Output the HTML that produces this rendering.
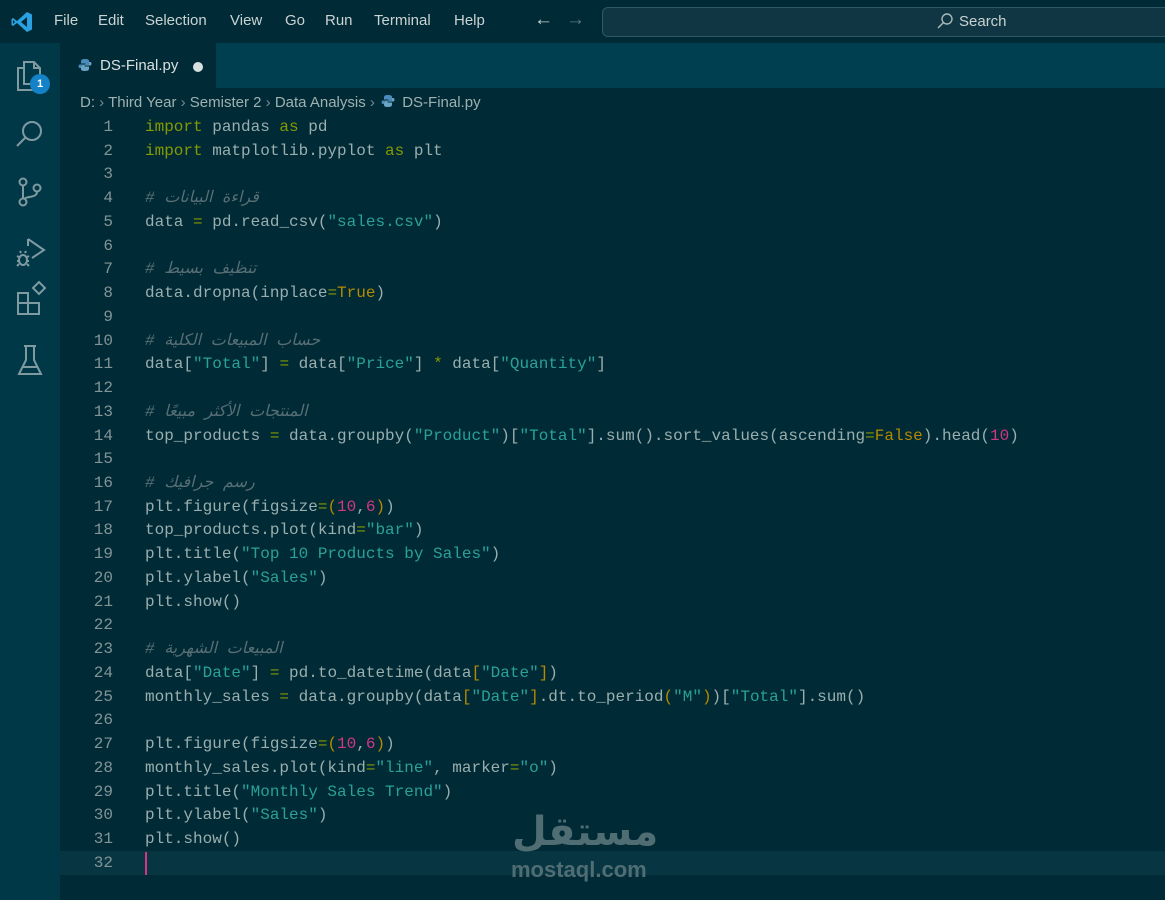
<!DOCTYPE html>
<html><head><meta charset="utf-8"><style>
*{margin:0;padding:0;box-sizing:border-box}
html,body{width:1165px;height:900px;overflow:hidden}
body{background:#002b36;font-family:"Liberation Sans","DejaVu Sans",sans-serif;position:relative}
#title{position:absolute;left:0;top:0;width:1165px;height:43px;background:#002a35}
.menu{position:absolute;top:12px;font-size:15px;color:#c9d3d3}
#search{position:absolute;left:602px;top:7px;width:580px;height:30px;border:1px solid #2c5a66;border-radius:6px;background:#0f3642}
#act{position:absolute;left:0;top:43px;width:60px;height:857px;background:#003847}
#tabs{position:absolute;left:60px;top:43px;width:1105px;height:45px;background:#003f50}
#tab{position:absolute;left:60px;top:43px;width:156px;height:45px;background:#002b36}
.crumb{position:absolute;top:94px;left:80px;font-size:15px;color:#9fb0b0;white-space:nowrap}
.crumb svg{position:relative;vertical-align:-1px;margin:0 3px 0 2px}
#code{position:absolute;left:0;top:116px;width:1165px;font-family:"Liberation Mono",monospace;font-size:16px;line-height:23.74px;color:#9aaeae}
.l{height:23.74px;position:relative}
.ln{position:absolute;left:60px;width:53px;text-align:right;color:#839496}
.t{position:absolute;left:145px;white-space:pre}
.k{color:#859900}.s{color:#2aa198}.n{color:#d33682}.y{color:#b58900}
.c{color:#586e75;font-style:italic;font-family:"Liberation Mono","DejaVu Sans",monospace}
#cur{position:absolute;left:60px;top:851px;width:1105px;height:24px;background:#073642}
svg{position:absolute}
</style></head><body>
<div id="title"></div>
<svg style="left:10px;top:10px" width="24" height="24" viewBox="0 0 24 24"><path d="M17 2 L22 4.5 V19.5 L17 22 L7 13 L3 16 L1.5 15 V9 L3 8 L7 11 Z M17 7 L11 12 L17 17 Z M3 10 V14 L5 12 Z" fill="#2aa1e0"/></svg>
<div class="menu" style="left:54px">File</div>
<div class="menu" style="left:98px">Edit</div>
<div class="menu" style="left:145px">Selection</div>
<div class="menu" style="left:230px">View</div>
<div class="menu" style="left:285px">Go</div>
<div class="menu" style="left:325px">Run</div>
<div class="menu" style="left:374px">Terminal</div>
<div class="menu" style="left:454px">Help</div>
<div class="menu" style="left:534px;top:9px;font-size:19px">←</div>
<div class="menu" style="left:566px;top:9px;font-size:19px;color:#5d7a82">→</div>
<div id="search"></div>
<svg style="left:936px;top:12px" width="18" height="18" viewBox="0 0 18 18"><circle cx="11" cy="7" r="5" fill="none" stroke="#a9b8b8" stroke-width="1.4"/><path d="M7.5 10.5 L2 16" stroke="#a9b8b8" stroke-width="1.5"/></svg>
<div class="menu" style="left:959px;top:13px;font-size:15px">Search</div>
<div id="act"></div>
<svg style="left:14px;top:56px" width="34" height="340" viewBox="0 0 34 340" fill="none" stroke="#7f9aa0" stroke-width="2">
<path d="M10 6 H20 L26 12 V28 H10 Z M20 6 V12 H26 M10 12 H4 V34 H20 V28"/>
<circle cx="18" cy="75" r="9"/><path d="M11.5 81.5 L3 90"/>
<circle cx="9" cy="126" r="3.5"/><circle cx="9" cy="146" r="3.5"/><circle cx="23" cy="132" r="3.5"/><path d="M9 130 V142 M23 136 C23 142 12 140 10 143"/>
<path d="M14 183 V190 M14 183 L30 194 L18 202"/><ellipse cx="9" cy="204" rx="4" ry="5"/><path d="M3 200 L5 201 M3 205 H5 M3 210 L5 208 M15 200 L13 201 M15 205 H13 M15 210 L13 208 M7 197 L6 195 M11 197 L12 195"/>
<path d="M4 237 H14 V247 H4 Z M4 247 V258 H14 V247 M14 247 H25 V258 H14 M14 237 V247 M19 232 L25 226 L31 232 L25 238 Z"/>
<path d="M12 290 V304 L5 318 H27 L20 304 V290 M10 290 H22 M8 311 H24"/>
</svg>
<div style="position:absolute;left:30px;top:74px;width:20px;height:20px;border-radius:50%;background:#1382c7;color:#fff;font-size:11px;font-weight:bold;text-align:center;line-height:20px">1</div>
<div id="tabs"></div><div id="tab"></div>
<svg style="left:78px;top:58px" width="14" height="14" viewBox="0 0 14 14"><path d="M7 1 C3 1 3 2.5 3 4 V5.5 H7.5 V6.5 H2 C0 6.5 0 10 2 10 H3 V8.5 C3 7.5 4 7 5 7 H9 C10 7 11 6 11 5 V3 C11 1.5 9.5 1 7 1Z" fill="#4b8bbe"/><path d="M7 13 C11 13 11 11.5 11 10 V8.5 H6.5 V7.5 H12 C14 7.5 14 4 12 4 H11 V5.5 C11 6.5 10 7 9 7 H5 C4 7 3 8 3 9 V11 C3 12.5 4.5 13 7 13Z" fill="#6aa5c8"/></svg>
<div style="position:absolute;left:100px;top:57px;font-size:15px;color:#d8e0e0">DS-Final.py</div>
<div style="position:absolute;left:193px;top:62px;width:10px;height:10px;border-radius:50%;background:#d8e0e0"></div>
<div class="crumb">D: <span style="color:#789">›</span> Third Year <span style="color:#789">›</span> Semister 2 <span style="color:#789">›</span> Data Analysis <span style="color:#789">›</span> <svg width="14" height="14" viewBox="0 0 14 14"><path d="M7 1 C3 1 3 2.5 3 4 V5.5 H7.5 V6.5 H2 C0 6.5 0 10 2 10 H3 V8.5 C3 7.5 4 7 5 7 H9 C10 7 11 6 11 5 V3 C11 1.5 9.5 1 7 1Z" fill="#4b8bbe"/><path d="M7 13 C11 13 11 11.5 11 10 V8.5 H6.5 V7.5 H12 C14 7.5 14 4 12 4 H11 V5.5 C11 6.5 10 7 9 7 H5 C4 7 3 8 3 9 V11 C3 12.5 4.5 13 7 13Z" fill="#6aa5c8"/></svg> DS-Final.py</div>
<div id="cur"></div>
<div style="position:absolute;left:145px;top:852px;width:2px;height:23px;background:#d33682"></div>
<div id="code"><div class="l"><span class="ln">1</span><span class="t"><span class="k">import</span> pandas <span class="k">as</span> pd</span></div><div class="l"><span class="ln">2</span><span class="t"><span class="k">import</span> matplotlib.pyplot <span class="k">as</span> plt</span></div><div class="l"><span class="ln">3</span></div><div class="l"><span class="ln">4</span><span class="t c"># قراءة البيانات</span></div><div class="l"><span class="ln">5</span><span class="t">data <span class="k">=</span> pd.read_csv(<span class="s">"sales.csv"</span>)</span></div><div class="l"><span class="ln">6</span></div><div class="l"><span class="ln">7</span><span class="t c"># تنظيف بسيط</span></div><div class="l"><span class="ln">8</span><span class="t">data.dropna(inplace<span class="k">=</span><span class="y">True</span>)</span></div><div class="l"><span class="ln">9</span></div><div class="l"><span class="ln">10</span><span class="t c"># حساب المبيعات الكلية</span></div><div class="l"><span class="ln">11</span><span class="t">data[<span class="s">"Total"</span>] <span class="k">=</span> data[<span class="s">"Price"</span>] <span class="k">*</span> data[<span class="s">"Quantity"</span>]</span></div><div class="l"><span class="ln">12</span></div><div class="l"><span class="ln">13</span><span class="t c"># المنتجات الأكثر مبيعًا</span></div><div class="l"><span class="ln">14</span><span class="t">top_products <span class="k">=</span> data.groupby(<span class="s">"Product"</span>)[<span class="s">"Total"</span>].sum().sort_values(ascending<span class="k">=</span><span class="y">False</span>).head(<span class="n">10</span>)</span></div><div class="l"><span class="ln">15</span></div><div class="l"><span class="ln">16</span><span class="t c"># رسم جرافيك</span></div><div class="l"><span class="ln">17</span><span class="t">plt.figure(figsize<span class="k">=</span><span class="y">(</span><span class="n">10</span>,<span class="n">6</span><span class="y">)</span>)</span></div><div class="l"><span class="ln">18</span><span class="t">top_products.plot(kind<span class="k">=</span><span class="s">"bar"</span>)</span></div><div class="l"><span class="ln">19</span><span class="t">plt.title(<span class="s">"Top 10 Products by Sales"</span>)</span></div><div class="l"><span class="ln">20</span><span class="t">plt.ylabel(<span class="s">"Sales"</span>)</span></div><div class="l"><span class="ln">21</span><span class="t">plt.show()</span></div><div class="l"><span class="ln">22</span></div><div class="l"><span class="ln">23</span><span class="t c"># المبيعات الشهرية</span></div><div class="l"><span class="ln">24</span><span class="t">data[<span class="s">"Date"</span>] <span class="k">=</span> pd.to_datetime(data<span class="y">[</span><span class="s">"Date"</span><span class="y">]</span>)</span></div><div class="l"><span class="ln">25</span><span class="t">monthly_sales <span class="k">=</span> data.groupby(data<span class="y">[</span><span class="s">"Date"</span><span class="y">]</span>.dt.to_period<span class="y">(</span><span class="s">"M"</span><span class="y">)</span>)[<span class="s">"Total"</span>].sum()</span></div><div class="l"><span class="ln">26</span></div><div class="l"><span class="ln">27</span><span class="t">plt.figure(figsize<span class="k">=</span><span class="y">(</span><span class="n">10</span>,<span class="n">6</span><span class="y">)</span>)</span></div><div class="l"><span class="ln">28</span><span class="t">monthly_sales.plot(kind<span class="k">=</span><span class="s">"line"</span>, marker<span class="k">=</span><span class="s">"o"</span>)</span></div><div class="l"><span class="ln">29</span><span class="t">plt.title(<span class="s">"Monthly Sales Trend"</span>)</span></div><div class="l"><span class="ln">30</span><span class="t">plt.ylabel(<span class="s">"Sales"</span>)</span></div><div class="l"><span class="ln">31</span><span class="t">plt.show()</span></div><div class="l"><span class="ln">32</span></div></div>
<div style="position:absolute;left:512px;top:810px;font-size:40px;font-weight:bold;color:#4f6d72;font-family:'DejaVu Sans',sans-serif;line-height:44px">مستقل</div>
<div style="position:absolute;left:511px;top:857px;font-size:22px;font-weight:bold;color:#4f6d72;line-height:26px">mostaql.com</div>
</body></html>
